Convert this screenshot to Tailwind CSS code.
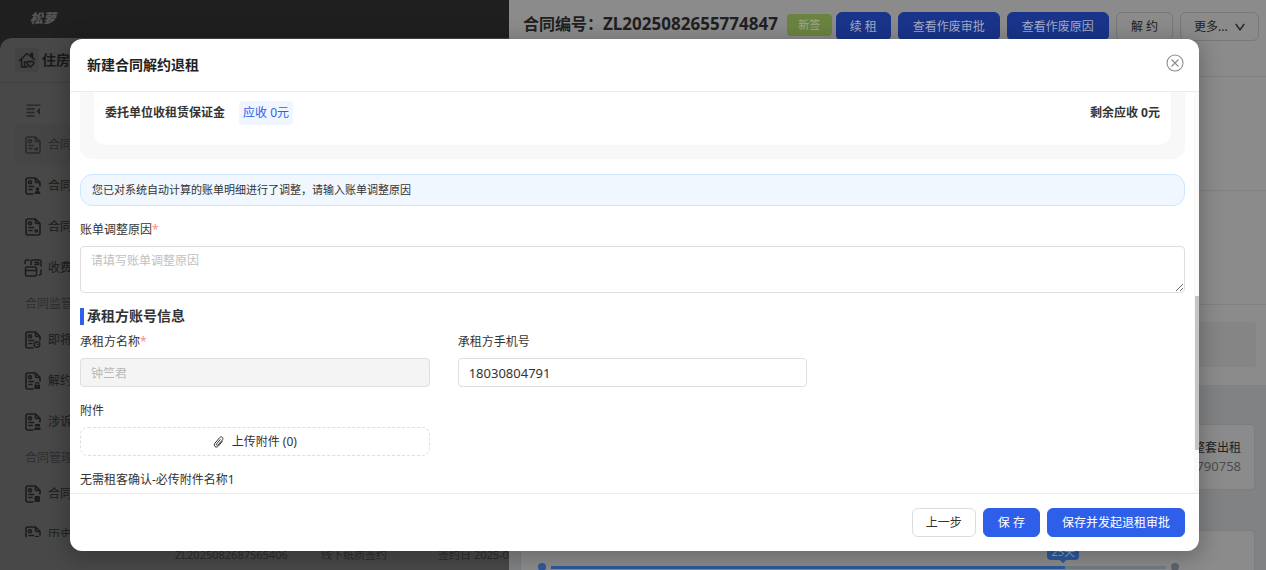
<!DOCTYPE html>
<html lang="zh-CN">
<head>
<meta charset="utf-8">
<title>新建合同解约退租</title>
<script src="https://cdn.jsdelivr.net/npm/@tailwindcss/browser@4"></script>
</head>
<body class="relative h-screen overflow-hidden bg-[#1f1f1f] font-['Noto_Sans','Noto_Sans_CJK_SC',sans-serif] text-xs text-[#333]">

<svg class="hidden" aria-hidden="true">
  <symbol id="doc" viewBox="0 0 16 18" fill="none" stroke="currentColor" stroke-width="1.600" stroke-linecap="round" stroke-linejoin="round">
    <path d="M8 17H3a2 2 0 0 1-2-2V3a2 2 0 0 1 2-2h7.500l4.500 4.500V9M10.500 1v3.500a1 1 0 0 0 1 1H15"/>
    <circle cx="5" cy="5.200" r="1.500"/>
    <path d="M4 9.500h4.500M4 12.500h3"/>
  </symbol>
</svg>

<!-- Page behind the drawer -->
<div class="flex h-full flex-col">
  <header class="flex h-[38px] shrink-0 items-center pl-[30px]">
    <span class="text-[13px] font-black italic text-[#555]">松萝</span>
  </header>
  <div class="flex min-h-0 flex-1 flex-col rounded-tl-xl bg-[#484848]">
    <div class="flex h-[45px] shrink-0 items-center gap-[3px] border-b border-[#404040] pl-[15px] text-[#1a1a1a]">
      <span class="flex size-6 items-center justify-center rounded bg-[#434343]">
        <svg class="size-[18px]" viewBox="0 0 18 18" fill="none" stroke="currentColor" stroke-width="1.500" stroke-linecap="round" stroke-linejoin="round"><path d="M1.500 9.500 9 2.500l7.500 6M13 5V2.500h1.500V6.500M3.500 8v8h5M9 16v-1M6.500 16v-5h2M12.500 16l-3-3a1.700 1.700 0 0 1 3-1.800 1.700 1.700 0 0 1 3 1.800z"/></svg>
      </span>
      <span class="text-sm font-bold">住房租赁</span>
    </div>
    <div class="flex min-h-0 flex-1">
      <nav class="mb-[33px] w-[155px] shrink-0 overflow-hidden text-[#1c1c1c]">
        <button type="button" aria-label="收起菜单" class="mt-[15px] mb-[2px] ml-[26px] flex h-6 items-center text-[#252525]">
          <svg class="h-[15px] w-[15px]" viewBox="0 0 15 15" fill="none" stroke="currentColor" stroke-width="1.300"><path d="M.5 2.200h14M.5 6h8M.5 9.500h8M.5 13h8"/><path d="M14 4.800v7L10.500 8.300z" fill="currentColor" stroke="none"/></svg>
        </button>
        <a href="#" class="ml-[15px] flex h-[41px] items-center gap-[7px] rounded bg-[#454545] pl-[10px] text-[#2a2a2e]"><svg class="h-[18px] w-4"><use href="#doc"/><path d="M15 8v7a2 2 0 0 1-2 2H8" fill="none" stroke="currentColor" stroke-width="1.400"/><path d="M9.500 11.500h3.500v3h-3.500z" fill="currentColor"/></svg>合同列表</a>
        <a href="#" class="ml-[15px] flex h-[41px] items-center gap-[7px] pl-[10px]"><svg class="h-[18px] w-4"><use href="#doc"/><circle cx="12.500" cy="12" r="1.800" fill="currentColor"/><path d="M9.500 17q.5-3.500 3-3.500t3 3.500z" fill="currentColor"/></svg>合同审批</a>
        <a href="#" class="ml-[15px] flex h-[41px] items-center gap-[7px] pl-[10px]"><svg class="h-[18px] w-4"><use href="#doc"/><path d="M9.500 11.500h3.500v3h-3.500z" fill="currentColor"/><path d="M15 8v7a2 2 0 0 1-2 2H8" fill="none" stroke="currentColor" stroke-width="1.600"/></svg>合同模板</a>
        <a href="#" class="ml-[15px] flex h-[41px] items-center gap-[6px] pl-[9px]"><svg class="size-[18px]" viewBox="0 0 18 18" fill="none" stroke="currentColor" stroke-width="1.500" stroke-linecap="round"><rect x="1.500" y="8" width="11" height="9" rx="1.500"/><path d="M1.500 11.500h11M1 4.500V3a2 2 0 0 1 2-2h2M7 5.500V2.500A1.500 1.500 0 0 1 8.500 1h7A1.500 1.500 0 0 1 17 2.500V7M11 3.500h3.500v2H11M17 11v3a2 2 0 0 1-2 2"/></svg>收费管理</a>
        <p class="flex h-[31px] items-center pl-[25px] text-[#2e2e31]">合同监管</p>
        <a href="#" class="ml-[15px] flex h-[41px] items-center gap-[7px] pl-[10px]"><svg class="h-[18px] w-4"><use href="#doc"/><circle cx="12" cy="13.500" r="2.800" fill="none" stroke="currentColor" stroke-width="1.300"/><path d="M12 12v1.500h1.500" fill="none" stroke="currentColor"/></svg>即将到期</a>
        <a href="#" class="ml-[15px] flex h-[41px] items-center gap-[7px] pl-[10px]"><svg class="h-[18px] w-4"><use href="#doc"/><path d="M9.500 13h5.500v4H9.500z" fill="currentColor"/><path d="M10.700 13v-1a1.600 1.600 0 0 1 3.200 0v1" fill="none" stroke="currentColor" stroke-width="1.200"/></svg>解约管理</a>
        <a href="#" class="ml-[15px] flex h-[41px] items-center gap-[7px] pl-[10px]"><svg class="h-[18px] w-4"><use href="#doc"/><path d="M10 11h5v2.500h-5zM9.500 14.500h6V17h-6z" fill="currentColor"/></svg>涉诉合同</a>
        <p class="flex h-[31px] items-center pl-[25px] text-[#2e2e31]">合同管理</p>
        <a href="#" class="ml-[15px] flex h-[41px] items-center gap-[7px] pl-[10px]"><svg class="h-[18px] w-4"><use href="#doc"/><rect x="9.500" y="11" width="5.500" height="6" rx="1" fill="currentColor"/></svg>合同台账</a>
        <a href="#" class="ml-[15px] flex h-[41px] items-center gap-[7px] pl-[10px]"><svg class="h-[18px] w-4"><use href="#doc"/><circle cx="12" cy="13" r="2.500" fill="none" stroke="currentColor" stroke-width="1.300"/></svg>历史合同</a>
      </nav>
      <main class="flex flex-1 flex-col justify-end">
        <div class="flex h-6 pl-5 text-[11px] leading-[18px] text-[#2b2b2b]">
          <span class="w-[146px]">ZL2025082687565406</span>
          <span class="w-[117px]">线下纸质签约</span>
          <span>签约日 2025-08-26</span>
        </div>
      </main>
    </div>
  </div>
</div>

<!-- Contract drawer -->
<section class="absolute inset-y-0 right-0 left-[509px] flex flex-col bg-[#8b8b8b] text-[#202020]">
  <header class="flex h-[77px] shrink-0 items-start gap-[7px] border-b border-[#818181] pt-3 pr-[7px] pl-[14px]">
    <h1 class="flex h-6 min-w-0 flex-1 items-center text-base font-bold whitespace-nowrap">合同编号：<span class="text-[17px]">ZL2025082655774847</span></h1>
    <span class="-mr-[3px] mt-[2px] flex h-[22px] w-[45px] items-center justify-center rounded-sm bg-[#6a8440] text-[11px] text-[#a2a78f]">新签</span>
    <button type="button" class="h-[29px] rounded-md border border-[#19348a] bg-[#19348a] px-[13px] text-[#a3abc6]">续 租</button>
    <button type="button" class="h-[29px] rounded-md border border-[#19348a] bg-[#19348a] px-[14px] text-[#a3abc6]">查看作废审批</button>
    <button type="button" class="h-[29px] rounded-md border border-[#19348a] bg-[#19348a] px-[14px] text-[#a3abc6]">查看作废原因</button>
    <button type="button" class="h-[29px] rounded-md border border-[#787878] px-[14px]">解 约</button>
    <button type="button" class="flex h-[29px] w-[79px] items-center justify-between rounded-md border border-[#787878] px-[13px]">更多...
      <svg class="size-[10px]" viewBox="0 0 10 10" fill="none" stroke="currentColor" stroke-width="1.400"><path d="M.8 2 5 7.800 9.200 2"/></svg>
    </button>
  </header>
  <div class="h-[114px] shrink-0 border-b border-[#818181]"></div>
  <div class="h-[114px] shrink-0 border-b border-[#818181]"></div>
  <div class="h-20 shrink-0 px-[10px] pt-[17px]"><div class="h-[45px] rounded bg-[#858585]"></div></div>
  <div class="flex min-h-0 flex-1 flex-col gap-10 bg-[#808284] px-[11px] pt-[39px]">
    <div class="flex h-[66px] shrink-0 flex-col items-end justify-center rounded-sm border border-[#7c7d7e] bg-[#8b8b8b] pr-[13px] text-xs leading-[18px]">
      <span>整套出租</span>
      <span class="text-[13px] text-[#4c4c4c]">18030790758</span>
    </div>
    <div class="flex flex-1 flex-col justify-end rounded-t-sm border border-b-0 border-[#7c7d7e] bg-[#8b8b8b] pr-[75px] pl-[17px]">
      <div class="relative flex h-[6px] items-center gap-[5px]">
        <span class="size-2 rounded-full bg-[#2c5a9c]"></span>
        <span class="flex h-[3px] flex-1 bg-[#727a84]"><span class="bg-[#2c5a9c]" style="width:83.500%"></span></span>
        <span class="size-2 rounded-full bg-[#5c646e]"></span>
        <span class="absolute right-[100px] bottom-[10px] rounded-sm bg-[#2c5a9c] px-1 text-[11px] leading-4 text-[#8fa6c6]">25天<i class="absolute -bottom-[2px] left-1/2 size-[6px] -translate-x-1/2 rotate-45 bg-[#2c5a9c]"></i></span>
      </div>
    </div>
  </div>
</section>

<!-- Dialog -->
<div class="absolute inset-0 flex pt-[39px] pr-[67px] pb-[19px] pl-[70px]">
  <form role="dialog" aria-labelledby="dialog-title" class="flex min-w-0 flex-1 flex-col overflow-hidden rounded-xl bg-white shadow-[0_4px_20px_4px_rgba(0,0,0,0.22)]">
    <header class="flex h-[53px] shrink-0 items-center justify-between border-b border-[#ececec] pr-[15px] pl-[17px]">
      <h2 id="dialog-title" class="text-sm font-bold text-[#222]">新建合同解约退租</h2>
      <button type="button" aria-label="关闭" class="mb-1 text-[#8c8c8c]">
        <svg class="size-[18px]" viewBox="0 0 18 18" fill="none" stroke="currentColor" stroke-width="1.100"><circle cx="9" cy="9" r="8"/><path d="m5.500 5.500 7 7m0-7-7 7"/></svg>
      </button>
    </header>

    <div class="flex min-h-0 flex-1">
      <div class="min-w-0 flex-1 overflow-hidden pr-[9px] pl-[10px]">
        <div class="rounded-b-xl bg-[#f8f8f8] px-[14px] pb-[14px]">
          <div class="flex h-[53px] items-start justify-between rounded-b-xl bg-white px-[11px] pt-[9px] font-bold">
            <div class="flex items-center gap-[14px]">
              <span>委托单位收租赁保证金</span>
              <span class="rounded bg-[#f0f6ff] px-1 leading-6 font-normal text-[#2f5fe8]">应收 0元</span>
            </div>
            <span class="leading-6">剩余应收 0元</span>
          </div>
        </div>

        <p class="mt-[15px] flex h-8 items-center rounded-xl border border-[#cfe5fc] bg-[#f0f7ff] px-[11px] text-[11px]">您已对系统自动计算的账单明细进行了调整，请输入账单调整原因</p>

        <label for="reason" class="mt-[15px] block h-[25px] leading-[18px]">账单调整原因<span class="text-[#f59090]">*</span></label>
        <textarea id="reason" placeholder="请填写账单调整原因" class="block h-[47px] w-full resize-y rounded border border-[#dedede] px-[10px] py-[5px] leading-[18px] placeholder:text-[#bfbfbf]"></textarea>

        <h3 class="mt-[14px] flex items-center gap-[3px] text-sm leading-[18px] font-bold"><span class="h-[17px] w-1 bg-[#2f5fe8]"></span>承租方账号信息</h3>

        <div class="mt-2 grid grid-cols-3 gap-x-7 gap-y-[15px]">
          <div>
            <label for="tenant" class="block h-[25px] leading-[18px]">承租方名称<span class="text-[#f59090]">*</span></label>
            <input id="tenant" value="钟竺君" disabled class="block h-[29px] w-full rounded border border-[#dedede] bg-[#f4f4f4] px-[10px] text-[#b8b8b8]">
          </div>
          <div>
            <label for="phone" class="block h-[25px] leading-[18px]">承租方手机号</label>
            <input id="phone" value="18030804791" class="block h-[29px] w-full rounded border border-[#dedede] px-[10px] text-[13px]">
          </div>
          <div class="col-start-1">
            <label for="upload" class="block h-[25px] leading-[18px]">附件</label>
            <button id="upload" type="button" class="flex h-[29px] w-full items-center justify-center gap-[7px] rounded-lg border border-dashed border-[#dedede]">
              <svg class="size-3" viewBox="0 0 12 12" fill="none" stroke="currentColor" stroke-width="1" stroke-linecap="round"><path d="M9.300 5.300 5.500 9.900c-1 1.200-2.500 1.600-3.500.7s-1-2.300 0-3.500l4.600-5.400c.7-.9 1.900-1.100 2.700-.4s.8 1.800.1 2.700L5.100 8.900c-.4.500-1 .6-1.400.2s-.4-.9 0-1.400l3.500-4.100"/></svg>
              上传附件 (0)
            </button>
          </div>
        </div>
        <p class="mt-[15px] leading-[18px]">无需租客确认-必传附件名称1</p>
      </div>
      <div class="w-[5px] shrink-0 bg-[#fafafa] pt-[204px] pl-px"><div class="h-[154px] bg-[#c4c4c4]"></div></div>
    </div>

    <footer class="flex h-[58px] shrink-0 items-center justify-end gap-[7px] border-t border-[#ececec] pr-[14px]">
      <button type="button" class="h-[29px] rounded-md border border-[#dcdcdc] px-[13px]">上一步</button>
      <button type="button" class="h-[29px] rounded-md border border-[#2f5fe8] bg-[#2f5fe8] px-[14px] text-white">保 存</button>
      <button type="submit" class="h-[29px] rounded-md border border-[#2f5fe8] bg-[#2f5fe8] px-[14px] text-white">保存并发起退租审批</button>
    </footer>
  </form>
</div>
</body>
</html>
